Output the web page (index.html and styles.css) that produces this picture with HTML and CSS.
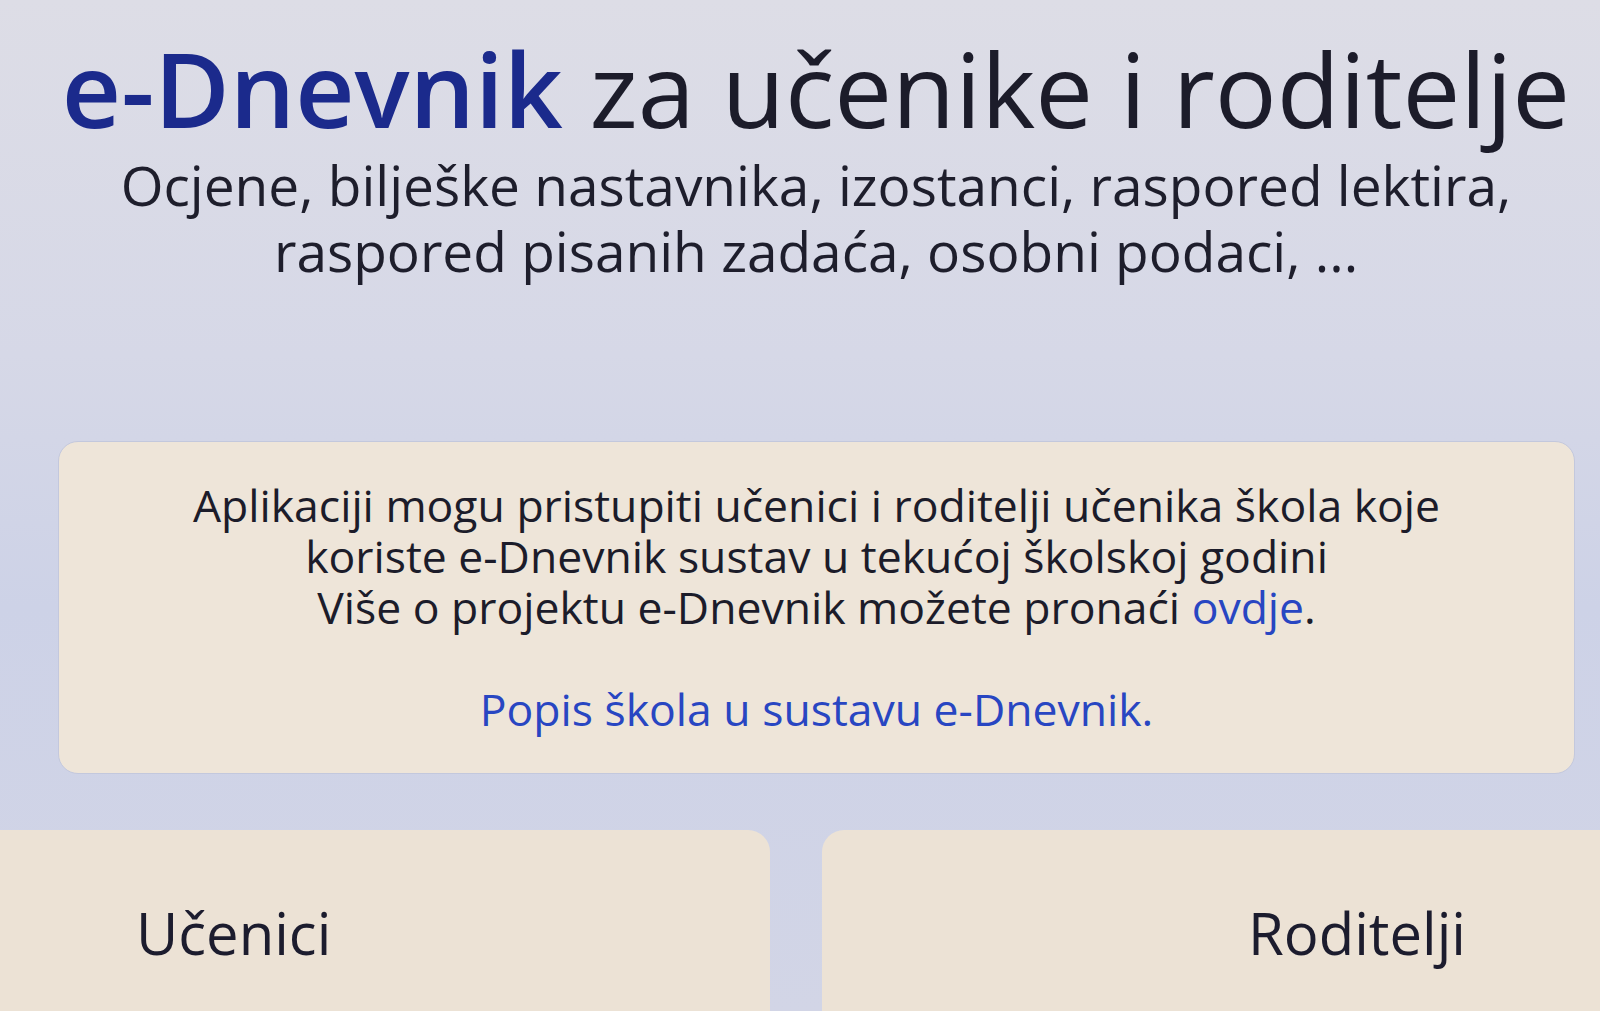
FILE: index.html
```html
<!DOCTYPE html>
<html lang="hr">
<head>
<meta charset="UTF-8">
<title>e-Dnevnik za učenike i roditelje</title>
<link rel="stylesheet" href="styles.css">
</head>
<body>
<div class="page">
  <div class="intro">
    <h1><span class="brand">e-Dnevnik</span> za učenike i roditelje</h1>
    <p class="lead">Ocjene, bilješke nastavnika, izostanci, raspored lektira,<br>raspored pisanih zadaća, osobni podaci, ...</p>
  </div>

  <div class="info">
    <p>Aplikaciji mogu pristupiti učenici i roditelji učenika škola koje</p>
    <p>koriste e-Dnevnik sustav u tekućoj školskoj godini</p>
    <p>Više o projektu e-Dnevnik možete pronaći <a href="#">ovdje</a>.</p>
    <p class="schools"><a href="#">Popis škola u sustavu e-Dnevnik.</a></p>
  </div>

  <div class="login-row">
    <a class="login-card students" href="#">Učenici</a>
    <a class="login-card parents" href="#">Roditelji</a>
  </div>
</div>
</body>
</html>
```

FILE: styles.css
```css
html, body {
  margin: 0;
  height: 100%;
  overflow: hidden;
}
body {
  font-family: "Open Sans", "DejaVu Sans", sans-serif;
  color: #1c1c2a;
  background: linear-gradient(180deg, #dddde6 0%, #d6d8e7 35%, #cdd2e7 60%, #d2d5e6 100%);
}
.page {
  padding-left: 32px;
}
.intro {
  text-align: center;
}
h1 {
  margin: 33px 0 0;
  font-size: 103px;
  line-height: 110px;
  font-weight: 400;
  white-space: nowrap;
}
.brand {
  color: #1b2a8c;
  font-weight: 600;
}
.lead {
  margin: 9px 0 0;
  font-size: 55px;
  line-height: 66px;
  color: #1e1e2c;
}
.info {
  margin: 157px 25px 0 26px;
  padding: 42px 0 34px;
  background: #eee5d9;
  border: 1px solid #c3c8dd;
  border-radius: 20px;
  text-align: center;
  font-size: 44.5px;
  line-height: 51px;
}
.info p {
  margin: 0;
  height: 51px;
  line-height: 41px;
}
.info .schools {
  margin-top: 51px;
}
.info a {
  color: #2846c2;
  text-decoration: none;
}
/* two big entry buttons at the bottom */
.login-row {
  display: grid;
  grid-template-columns: 810px 1fr;
  gap: 52px;
  width: 1700px;
  margin: 56px 0 0 -72px;
}
.login-card {
  display: block;
  height: 183px;
  padding-top: 68px;
  box-sizing: border-box;
  background: #ece2d5;
  border-radius: 22px 22px 0 0;
  color: #1c1c2e;
  text-decoration: none;
  font-size: 58px;
  line-height: 70px;
}
.students {
  padding-left: 176px;
}
.parents {
  text-align: right;
  padding-right: 194px;
}
```
